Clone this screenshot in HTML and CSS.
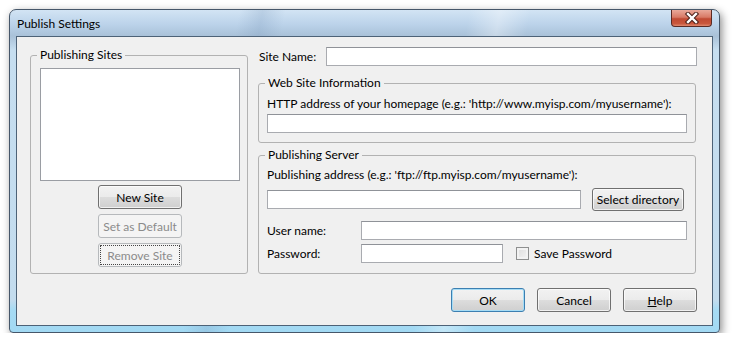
FILE: index.html
```html
<!DOCTYPE html>
<html lang="en">

<head>
    <meta charset="UTF-8">
    <meta name="viewport" content="width=device-width, initial-scale=1.0">
    <title>Publish Settings</title>
    <link rel="stylesheet" href="styles.css">
</head>

<body>

    <div class="window">
        <div class="titlebar">
            <span class="title">Publish Settings</span>
            <div class="close">
                <svg width="16" height="12" viewBox="0 0 16 12">
                    <path d="M4 2 L12 10 M12 2 L4 10" stroke="#4b1f18" stroke-width="4.4" stroke-linecap="square" fill="none" />
                    <path d="M4 2 L12 10 M12 2 L4 10" stroke="#ffffff" stroke-width="2.4" stroke-linecap="square" fill="none" />
                </svg>
            </div>
        </div>

        <div class="client">
            <div class="main">
                <fieldset class="group sites">
                    <legend>Publishing Sites</legend>
                    <div class="listbox"></div>
                    <div class="site-buttons">
                        <button class="btn">New Site</button>
                        <button class="btn" disabled>Set as Default</button>
                        <button class="btn focused" disabled>Remove Site</button>
                    </div>
                </fieldset>

                <div class="details">
                    <div class="site-name">
                        <label>Site Name:</label>
                        <input type="text" class="field name-field">
                    </div>

                    <fieldset class="group web">
                        <legend>Web Site Information</legend>
                        <label class="caption">HTTP address of your homepage (e.g.: 'http://www.myisp.com/myusername'):</label>
                        <input type="text" class="field wide-field">
                    </fieldset>

                    <fieldset class="group server">
                        <legend>Publishing Server</legend>
                        <label class="caption">Publishing address (e.g.: 'ftp://ftp.myisp.com/myusername'):</label>
                        <div class="address-row">
                            <input type="text" class="field address-field">
                            <button class="btn dir-btn">Select directory</button>
                        </div>
                        <div class="login-row user-row">
                            <label>User name:</label>
                            <input type="text" class="field user-field">
                        </div>
                        <div class="login-row">
                            <label>Password:</label>
                            <input type="password" class="field pass-field">
                            <span class="check"></span>
                            <span class="check-label">Save Password</span>
                        </div>
                    </fieldset>
                </div>
            </div>

            <div class="actions">
                <button class="btn action default">OK</button>
                <button class="btn action">Cancel</button>
                <button class="btn action"><u>H</u>elp</button>
            </div>
        </div>
    </div>

</body>

</html>
```

FILE: styles.css
```css
body {
    margin: 0;
    background-color: #ffffff;
    font-family: "Segoe UI", Lato, sans-serif;
    font-size: 12px;
    line-height: 16px;
    color: #000000;
}

.window {
    box-sizing: border-box;
    width: 711px;
    height: 324px;
    margin: 9px 0 0 9px;
    padding: 0 6px 6px 6px;
    border: 1px solid #46576a;
    border-radius: 7px 7px 4px 4px;
    background:
        linear-gradient(100deg, transparent 0, transparent 30%, rgba(120, 150, 185, 0.25) 33%, transparent 36%, transparent 100%),
        linear-gradient(100deg, transparent 0, transparent 60%, rgba(255, 255, 255, 0.35) 64%, transparent 68%, transparent 100%),
        linear-gradient(to bottom, #d2e4f4 0, #bcd3ea 14px, #a9c1d8 26px, #c6def0 40px, #c3dcee 290px, #a6dbf4 300px, #a2d9f3 100%);
    box-shadow: 2px 3px 8px rgba(0, 0, 0, 0.45);
}

.titlebar {
    display: flex;
    justify-content: space-between;
    height: 26px;
}

.title {
    align-self: center;
    padding-left: 1px;
    margin-top: 1px;
}

.close {
    display: flex;
    justify-content: center;
    align-items: center;
    box-sizing: border-box;
    width: 41px;
    height: 17px;
    margin-right: 1px;
    border: 1px solid #5a2a24;
    border-top: none;
    border-radius: 0 0 4px 4px;
    background: linear-gradient(to bottom, #e9a99a 0, #d87a66 45%, #c04a33 55%, #c9573d 85%, #e08a70 100%);
}

.client {
    box-sizing: border-box;
    height: 290px;
    border: 1px solid #4d6277;
    background-color: #f0f0f0;
}

.main {
    display: flex;
    padding: 10px 15px 0 13px;
}

.group {
    box-sizing: border-box;
    margin: 0;
    border: 1px solid #b2b2b2;
    border-radius: 3px;
}

.group legend {
    padding: 0 3px;
    margin-left: -2px;
}

.sites {
    width: 218px;
    height: 227px;
    padding: 5px 7px 6px 9px;
}

.sites legend {
    margin-left: -3px;
}

.listbox {
    box-sizing: border-box;
    width: 200px;
    height: 113px;
    border: 1px solid #9a9da3;
    background-color: #ffffff;
}

.site-buttons {
    display: flex;
    flex-direction: column;
    align-items: center;
    gap: 5px;
    margin-top: 4px;
}

.btn {
    box-sizing: border-box;
    height: 24px;
    padding: 0;
    font-family: inherit;
    font-size: 12px;
    color: #000000;
    border: 1px solid #707070;
    border-radius: 3px;
    background: linear-gradient(to bottom, #f2f2f2 0, #ebebeb 50%, #dddddd 50%, #cfcfcf 100%);
    box-shadow: inset 0 0 0 1px rgba(255, 255, 255, 0.7);
}

.site-buttons .btn {
    width: 84px;
}

.btn:disabled {
    color: #8b8b8b;
    border-color: #b6b9bc;
    background: #f4f4f4;
    box-shadow: none;
}

.btn.focused {
    outline: 1px dotted #444444;
    outline-offset: -3px;
}

.details {
    display: flex;
    flex-direction: column;
    width: 439px;
    margin-left: 10px;
}

.site-name {
    display: flex;
    align-items: center;
    height: 19px;
    padding-left: 1px;
}

.site-name label {
    width: 67px;
}

.field {
    box-sizing: border-box;
    height: 19px;
    margin: 0;
    border: 1px solid #a9abb0;
    border-top-color: #8f9298;
    background-color: #ffffff;
}

.name-field {
    width: 371px;
}

.web {
    width: 438px;
    margin-top: 9px;
    padding: 5px 8px 9px 8px;
}

.caption {
    display: block;
    white-space: nowrap;
}

.wide-field {
    display: block;
    width: 420px;
    margin-top: 2px;
}

.server {
    width: 438px;
    margin-top: 4px;
    padding: 4px 8px 10px 8px;
}

.address-row {
    display: flex;
    align-items: center;
    margin-top: 5px;
}

.address-field {
    width: 314px;
}

.dir-btn {
    width: 92px;
    height: 23px;
    margin-left: 11px;
}

.login-row {
    display: flex;
    align-items: center;
    margin-top: 4px;
}

.user-row {
    margin-top: 10px;
}

.login-row label {
    width: 94px;
}

.user-field {
    width: 326px;
}

.pass-field {
    width: 142px;
}

.check {
    box-sizing: border-box;
    width: 13px;
    height: 13px;
    margin-left: 13px;
    border: 1px solid #8e8f8f;
    background: linear-gradient(135deg, #dcdcdc 0, #f4f4f4 100%);
    box-shadow: inset 0 0 0 2px #f2f2f2;
}

.check-label {
    margin-left: 5px;
}

.actions {
    display: flex;
    justify-content: flex-end;
    gap: 12px;
    padding: 14px 15px 0 0;
}

.action {
    width: 74px;
}

.btn.default {
    border-color: #3c7fb1;
    box-shadow: inset 0 0 0 1px #a6dcf5;
}
```
